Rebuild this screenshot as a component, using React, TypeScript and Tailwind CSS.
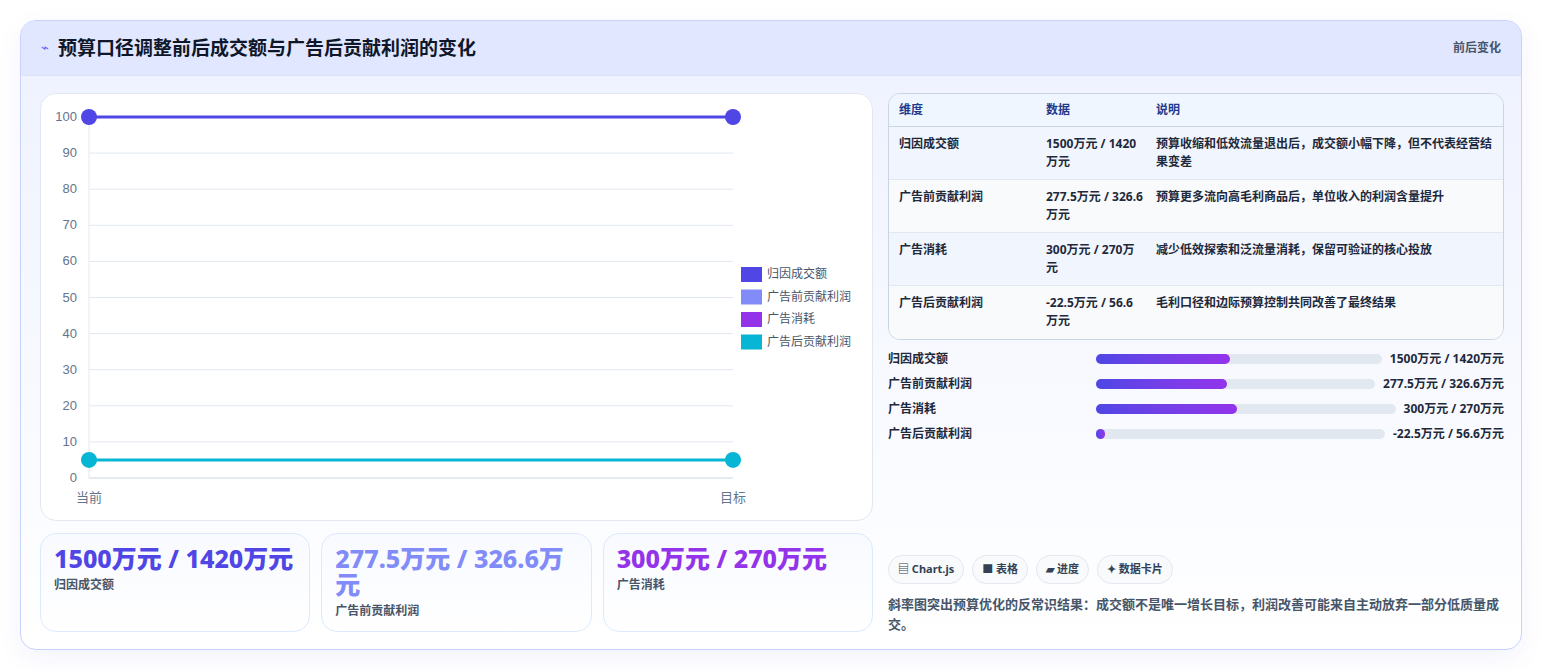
import React from "react";

const F = { fontFamily: '"Noto Sans", "Noto Sans CJK SC", sans-serif' };

const rows = [
  ["归因成交额", "1500万元 / 1420万元", "预算收缩和低效流量退出后，成交额小幅下降，但不代表经营结果变差"],
  ["广告前贡献利润", "277.5万元 / 326.6万元", "预算更多流向高毛利商品后，单位收入的利润含量提升"],
  ["广告消耗", "300万元 / 270万元", "减少低效探索和泛流量消耗，保留可验证的核心投放"],
  ["广告后贡献利润", "-22.5万元 / 56.6万元", "毛利口径和边际预算控制共同改善了最终结果"],
];
const bars = [
  ["归因成交额", "1500万元 / 1420万元", 47],
  ["广告前贡献利润", "277.5万元 / 326.6万元", 47],
  ["广告消耗", "300万元 / 270万元", 47],
  ["广告后贡献利润", "-22.5万元 / 56.6万元", 3],
] as const;

function Chart() {
  const y = (v: number) => 23 + (100 - v) * 3.61;
  const ticks = [0, 10, 20, 30, 40, 50, 60, 70, 80, 90, 100];
  const legend = [
    ["归因成交额", "#4f46e5"],
    ["广告前贡献利润", "#818cf8"],
    ["广告消耗", "#9333ea"],
    ["广告后贡献利润", "#06b6d4"],
  ];
  return (
    <svg width="832" height="428" className="block" style={{ fontFamily: '"Liberation Sans", "Noto Sans CJK SC", sans-serif' }}>
      {ticks.map((t) => (
        <g key={t}>
          <line x1={48} x2={692} y1={y(t)} y2={y(t)} stroke={t === 0 ? "#cbd5e1" : "#e2e8f0"} />
          <text x={36} y={y(t) + 4} textAnchor="end" fontSize="13" fill="#64748b">{t}</text>
        </g>
      ))}
      <line x1={48} x2={48} y1={y(100)} y2={y(0)} stroke="#e2e8f0" />
      <text x={48} y={408} textAnchor="middle" fontSize="13" fill="#64748b">当前</text>
      <text x={692} y={408} textAnchor="middle" fontSize="13" fill="#64748b">目标</text>
      <line x1={48} x2={692} y1={y(100)} y2={y(100)} stroke="#4f46e5" strokeWidth="3" />
      <line x1={48} x2={692} y1={y(5)} y2={y(5)} stroke="#06b6d4" strokeWidth="3" />
      <circle cx={48} cy={y(100)} r={8} fill="#4f46e5" />
      <circle cx={692} cy={y(100)} r={8} fill="#4f46e5" />
      <circle cx={48} cy={y(5)} r={8} fill="#06b6d4" />
      <circle cx={692} cy={y(5)} r={8} fill="#06b6d4" />
      {legend.map(([l, c], i) => (
        <g key={l}>
          <rect x={700} y={173 + i * 22.5} width={21} height={15} fill={c} />
          <text x={726} y={184 + i * 22.5} fontSize="12" fill="#475569">{l}</text>
        </g>
      ))}
    </svg>
  );
}

export default function App() {
  return (
    <div className="w-[1543px] h-[671px] bg-white pt-5 pl-5" style={F}>
      <div className="w-[1502px] h-[630px] rounded-2xl border border-[#c7d2fe] bg-gradient-to-b from-[#eef2ff] to-white overflow-hidden shadow-[0_8px_24px_rgba(99,102,241,0.08)]">
        <div className="h-[55px] bg-[#e0e7ff] border-b border-[#dbe3f4] flex items-center justify-between pl-5 pr-5">
          <div className="flex items-center gap-[9px]">
            <span className="text-[#6366f1] text-[13px]">⌁</span>
            <span className="text-[19px] font-bold text-[#0f172a]">预算口径调整前后成交额与广告后贡献利润的变化</span>
          </div>
          <span className="text-[12px] font-bold text-[#475569]">前后变化</span>
        </div>
        <div className="flex gap-[15px] pl-[19px] pt-[17px]">
          <div className="w-[833px] flex flex-col gap-3">
            <div className="h-[428px] rounded-2xl border border-[#e2e8f0] bg-white overflow-hidden">
              <Chart />
            </div>
            <div className="grid grid-cols-3 gap-[11px]">
              {[
                ["1500万元 / 1420万元", "归因成交额", "#4f46e5"],
                ["277.5万元 / 326.6万元", "广告前贡献利润", "#818cf8"],
                ["300万元 / 270万元", "广告消耗", "#9333ea"],
              ].map(([v, l, c]) => (
                <div key={l} className="h-[99px] rounded-2xl border border-[#dbeafe] bg-gradient-to-b from-[#f8faff] to-white px-[13px] pt-[11px]">
                  <div className="text-[25px] font-extrabold leading-[26px]" style={{ color: c }}>{v}</div>
                  <div className="text-[12px] font-bold text-[#475569] mt-[5px]">{l}</div>
                </div>
              ))}
            </div>
          </div>
          <div className="w-[616px] flex flex-col">
            <div className="rounded-xl border border-[#cbd5e1] overflow-hidden text-[12px] font-bold text-[#1e293b]">
              <div className="flex h-[33px] items-center bg-[#eff6ff] border-b border-[#cbd5e1] text-[#1e3a8a]">
                <div className="w-[157px] pl-[10px]">维度</div>
                <div className="w-[110px]">数据</div>
                <div className="flex-1">说明</div>
              </div>
              {rows.map((r, i) => (
                <div key={i} className={`flex h-[53px] pt-[8px] leading-[18px] ${i % 2 === 0 ? "bg-[#f1f5fd]" : "bg-[#f8fafc]"} ${i < 3 ? "border-b border-[#e2e8f0]" : ""}`}>
                  <div className="w-[157px] pl-[10px]">{r[0]}</div>
                  <div className="w-[110px] pr-[12px]">{r[1]}</div>
                  <div className="flex-1 pr-2">{r[2]}</div>
                </div>
              ))}
            </div>
            <div className="flex flex-col gap-[7px] mt-[10px] text-[12px] font-bold text-[#1e293b]">
              {bars.map(([l, v, p]) => (
                <div key={l} className="flex items-center h-[18px] gap-2">
                  <div className="w-[200px] shrink-0">{l}</div>
                  <div className="flex-1 h-[10px] rounded-full bg-[#e2e8f0]">
                    <div className="h-full rounded-full bg-gradient-to-r from-[#4f46e5] to-[#9333ea]" style={{ width: p + "%" }} />
                  </div>
                  <div className="shrink-0">{v}</div>
                </div>
              ))}
            </div>
            <div className="flex gap-2 mt-[112px] text-[11px] font-bold text-[#334155]">
              {["▤ Chart.js", "■ 表格", "▰ 进度", "✦ 数据卡片"].map((c) => (
                <span key={c} className="h-[29px] px-[9px] flex items-center rounded-full border border-[#e2e8f0] bg-[#f8fafc]">{c}</span>
              ))}
            </div>
            <div className="mt-[10px] text-[13px] font-bold text-[#475569] leading-[20px]">
              斜率图突出预算优化的反常识结果：成交额不是唯一增长目标，利润改善可能来自主动放弃一部分低质量成交。
            </div>
          </div>
        </div>
      </div>
    </div>
  );
}
